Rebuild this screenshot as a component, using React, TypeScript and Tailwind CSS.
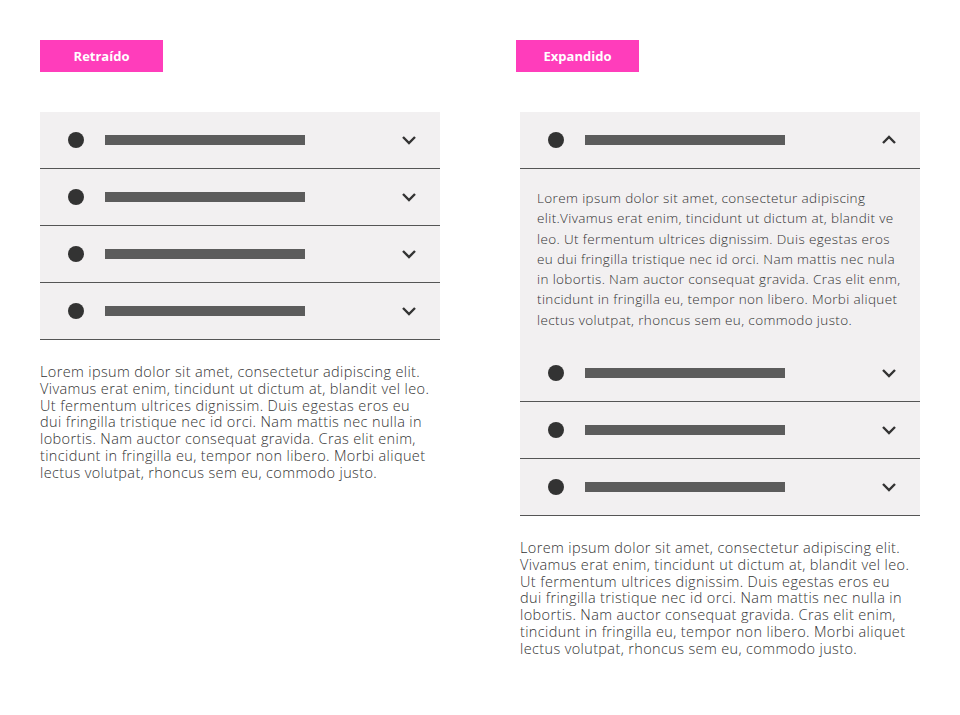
import React from "react";

const lorem = [
  "Lorem ipsum dolor sit amet, consectetur adipiscing elit.",
  "Vivamus erat enim, tincidunt ut dictum at, blandit vel leo.",
  "Ut fermentum ultrices dignissim. Duis egestas eros eu",
  "dui fringilla tristique nec id orci. Nam mattis nec nulla in",
  "lobortis. Nam auctor consequat gravida. Cras elit enim,",
  "tincidunt in fringilla eu, tempor non libero. Morbi aliquet",
  "lectus volutpat, rhoncus sem eu, commodo justo.",
];

const panel = [
  "Lorem ipsum dolor sit amet, consectetur adipiscing",
  "elit.Vivamus erat enim, tincidunt ut dictum at, blandit ve",
  "leo. Ut fermentum ultrices dignissim. Duis egestas eros",
  "eu dui fringilla tristique nec id orci. Nam mattis nec nula",
  "in lobortis. Nam auctor consequat gravida. Cras elit enm,",
  "tincidunt in fringilla eu, tempor non libero. Morbi aliquet",
  "lectus volutpat, rhoncus sem eu, commodo justo.",
];

function Chevron({ up }: { up?: boolean }) {
  return (
    <svg width="16" height="10" viewBox="0 0 16 10" className="text-[#333]">
      <polyline
        points={up ? "2,8 8,2 14,8" : "2,2 8,8 14,2"}
        fill="none"
        stroke="currentColor"
        strokeWidth="2.4"
      />
    </svg>
  );
}

function Row({ open }: { open?: boolean }) {
  return (
    <div className="h-[57px] flex items-center pl-[28px] pr-[23px] pb-px border-b border-[#555]">
      <span className="w-4 h-4 rounded-full bg-[#333]" />
      <span className="ml-[21px] w-[200px] h-[10px] bg-[#5c5c5c]" />
      <span className="ml-auto flex">
        <Chevron up={open} />
      </span>
    </div>
  );
}

function Label({ text }: { text: string }) {
  return (
    <div className="w-[123px] h-[32px] pt-[2px] bg-[#ff3dbb] flex items-center justify-center text-white text-[13px] font-bold">
      {text}
    </div>
  );
}

function Paragraph() {
  return (
    <p className="text-[14.5px] leading-[16.8px] text-[#333] font-light tracking-[0.37px] whitespace-nowrap">
      {lorem.map((l, i) => (
        <span key={i} className="block">
          {l}
        </span>
      ))}
    </p>
  );
}

export default function App() {
  return (
    <div
      className="w-[960px] h-[715px] bg-white flex gap-[80px] pl-[40px] pt-[40px]"
      style={{ fontFamily: "'Open Sans', 'Liberation Sans', sans-serif" }}
    >
      <div className="w-[400px] flex flex-col">
        <Label text="Retraído" />
        <div className="mt-[40px] bg-[#f2f0f1]">
          <Row />
          <Row />
          <Row />
          <Row />
        </div>
        <div className="mt-[24px]">
          <Paragraph />
        </div>
      </div>

      <div className="w-[400px] flex flex-col">
        <div className="-ml-[4px]">
          <Label text="Expandido" />
        </div>
        <div className="mt-[40px] bg-[#f2f0f1]">
          <Row open />
          <div className="pl-[17px] pt-[19px] pb-[15px] text-[13.5px] leading-[20.3px] text-[#333] font-light tracking-[0.37px] whitespace-nowrap">
            {panel.map((l, i) => (
              <span key={i} className="block">
                {l}
              </span>
            ))}
          </div>
          <Row />
          <Row />
          <Row />
        </div>
        <div className="mt-[24px]">
          <Paragraph />
        </div>
      </div>
    </div>
  );
}
